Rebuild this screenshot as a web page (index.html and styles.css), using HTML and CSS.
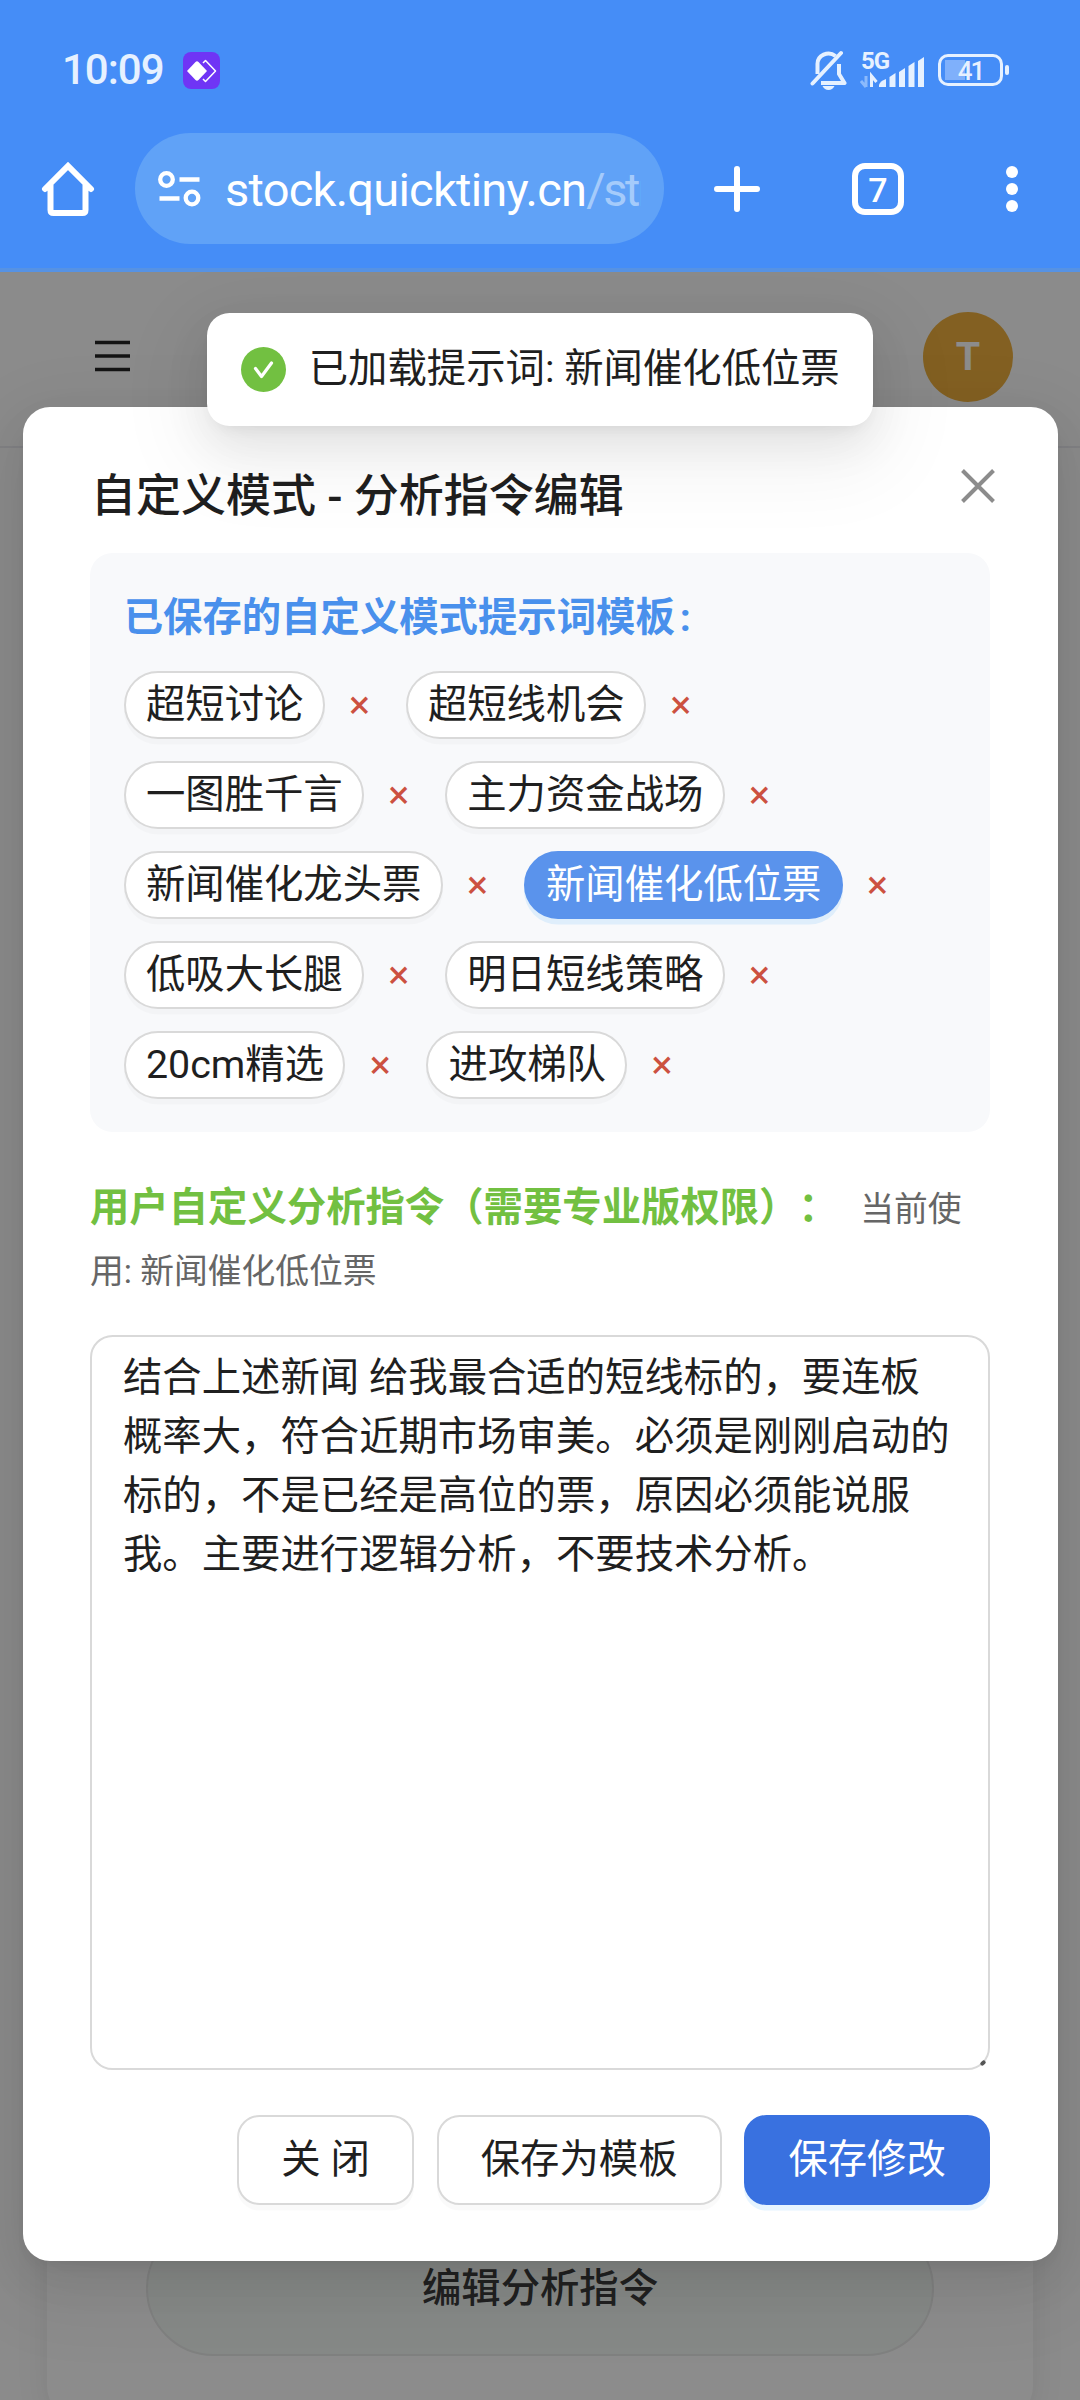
FILE: index.html
```html
<!DOCTYPE html>
<html lang="zh-CN">

<head>
    <meta charset="UTF-8">
    <meta name="viewport" content="width=device-width, initial-scale=1.0">
    <title>自定义模式 - 分析指令编辑</title>
    <link rel="stylesheet" href="styles.css">
</head>

<body>
    <div class="browser">
        <div class="status-bar">
            <span class="time">10:09</span>
            <svg class="app-icon" width="37" height="37" viewBox="0 0 37 37">
                <rect width="37" height="37" rx="8" fill="#6f35f5"/>
                <path d="M20 11l2.500-2.500L32.500 19 22.500 29.500 20 27" fill="none" stroke="#fff" stroke-width="1.500" stroke-linejoin="round"/>
                <path d="M4 19L12.500 10Q14 8.500 15.500 10L24 19 15.500 28Q14 29.500 12.500 28Z" fill="#fff"/>
            </svg>
            <div class="status-icons">
                <svg class="bell" width="37" height="41" viewBox="0 0 37 41">
                    <path d="M7.500 24V14.500a11 10.500 0 0 1 18-8.500M29 14v10l5.500 9H11" fill="none" stroke="#e6f1ff" stroke-width="4" stroke-linejoin="round"/>
                    <path d="M2.500 33.500L31 3" stroke="#e6f1ff" stroke-width="4" stroke-linecap="round"/>
                    <path d="M12.500 36h12q-2 4-6 4t-6-4z" fill="#e6f1ff"/>
                </svg>
                <div class="signal">
                    <span class="network">5G</span>
                    <svg width="66" height="36" viewBox="0 0 66 36">
                        <path d="M6 24v11M6 35l-5-6" stroke="#8bbafc" stroke-width="3" fill="none"/>
                        <path d="M11.500 35V24l5 6" stroke="#e6f1ff" stroke-width="3" fill="none"/>
                        <g fill="#e6f1ff">
                            <path d="M19 33q1-4 7-6v8h-7z"/>
                            <path d="M29.500 25l6-4v14h-6z"/>
                            <path d="M39 20l6-4v19h-6z"/>
                            <path d="M48.500 14l6-4v25h-6z"/>
                            <path d="M58 9l6-4v30h-6z"/>
                        </g>
                    </svg>
                </div>
                <div class="battery"><span class="battery-level">41</span></div>
            </div>
        </div>

        <div class="toolbar">
            <svg class="home" width="54" height="56" viewBox="0 0 54 56">
                <path d="M4 28L27 5l23 23M9.500 24v25q0 3 3 3h29q3 0 3-3V24" fill="none" stroke="#fff" stroke-width="6" stroke-linecap="round"/>
            </svg>
            <div class="url-bar">
                <svg width="44" height="38" viewBox="0 0 44 38">
                    <g fill="none" stroke="#fff" stroke-width="4.300">
                        <circle cx="8.500" cy="9.500" r="6.300"/>
                        <circle cx="34" cy="28" r="6.300"/>
                        <path d="M21.500 9.500h20M1.500 28.500h20"/>
                    </g>
                </svg>
                <div class="url">stock.quicktiny.cn<span class="url-path">/str</span></div>
            </div>
            <svg class="plus" width="46" height="46" viewBox="0 0 46 46">
                <path d="M23 3v40M3 23h40" stroke="#fff" stroke-width="6" stroke-linecap="round"/>
            </svg>
            <div class="tabs">7</div>
            <svg class="more" width="12" height="48" viewBox="0 0 12 48">
                <g fill="#fff">
                    <circle cx="6" cy="7" r="6"/>
                    <circle cx="6" cy="24" r="6"/>
                    <circle cx="6" cy="41" r="6"/>
                </g>
            </svg>
        </div>
    </div>

    <div class="page">
        <header class="page-header">
            <svg width="35" height="32" viewBox="0 0 35 32">
                <path d="M0 2.500h35M0 16h35M0 29.500h35" stroke="#262626" stroke-width="3.500"/>
            </svg>
            <div class="avatar">T</div>
        </header>
        <main class="page-card">
            <button class="edit-btn">编辑分析指令</button>
        </main>

        <div class="mask"></div>

        <div class="modal">
            <h1 class="modal-title">自定义模式 - 分析指令编辑</h1>
            <svg class="modal-close" width="36" height="36" viewBox="0 0 36 36">
                <path d="M2.500 2.500l31 31M33.500 2.500l-31 31" stroke="#8c8c8c" stroke-width="4"/>
            </svg>

            <section class="templates">
                <h2 class="templates-title">已保存的自定义模式提示词模板<span class="colon">:</span></h2>
                <div class="template-list">
                    <div class="template"><button class="chip">超短讨论</button><button class="delete">×</button></div>
                    <div class="template"><button class="chip">超短线机会</button><button class="delete">×</button></div>
                    <div class="template"><button class="chip">一图胜千言</button><button class="delete">×</button></div>
                    <div class="template"><button class="chip">主力资金战场</button><button class="delete">×</button></div>
                    <div class="template"><button class="chip">新闻催化龙头票</button><button class="delete">×</button></div>
                    <div class="template"><button class="chip active">新闻催化低位票</button><button class="delete">×</button></div>
                    <div class="template"><button class="chip">低吸大长腿</button><button class="delete">×</button></div>
                    <div class="template"><button class="chip">明日短线策略</button><button class="delete">×</button></div>
                    <div class="template"><button class="chip">20cm精选</button><button class="delete">×</button></div>
                    <div class="template"><button class="chip">进攻梯队</button><button class="delete">×</button></div>
                </div>
            </section>

            <div class="prompt-label"><strong>用户自定义分析指令（需要专业版权限）：</strong><span class="current">当前使用: 新闻催化低位票</span></div>

            <div class="prompt-box">
                <textarea class="prompt-input">结合上述新闻 给我最合适的短线标的，要连板概率大，符合近期市场审美。必须是刚刚启动的标的，不是已经是高位的票，原因必须能说服我。主要进行逻辑分析，不要技术分析。</textarea>
                <span class="resize-handle"></span>
            </div>

            <div class="modal-footer">
                <button class="btn">关 闭</button>
                <button class="btn">保存为模板</button>
                <button class="btn btn-primary">保存修改</button>
            </div>
        </div>

        <div class="message">
            <svg width="45" height="45" viewBox="0 0 45 45">
                <circle cx="22.500" cy="22.500" r="22.500" fill="#72c041"/>
                <path d="M14.500 21.500l6 8L30.500 16" fill="none" stroke="#fff" stroke-width="3.200" stroke-linecap="round" stroke-linejoin="round"/>
            </svg>
            <span>已加载提示词: 新闻催化低位票</span>
        </div>
    </div>
</body>

</html>
```
FILE: styles.css
```css
* {
    margin: 0;
    padding: 0;
    box-sizing: border-box;
}

body {
    width: 1080px;
    height: 2400px;
    overflow: hidden;
    display: flex;
    flex-direction: column;
    font-family: Roboto, 'Noto Sans CJK SC', sans-serif;
    font-size: 39.375px;
    line-height: 61.875px;
    color: #1f1f1f;
    text-spacing-trim: space-all;
}

svg {
    display: block;
    flex-shrink: 0;
}

button,
textarea {
    font: inherit;
    color: inherit;
}

/* Browser chrome */
.browser {
    height: 272px;
    flex-shrink: 0;
    background: #458df7;
    border-bottom: 4px solid #5692e3;
}

.status-bar {
    display: flex;
    align-items: center;
    height: 133px;
    padding: 7px 71px 0 62px;
    color: #e6f1ff;
}

.time {
    width: 121px;
    font-size: 42px;
    font-weight: 500;
    letter-spacing: -1px;
}

.status-icons {
    display: flex;
    align-items: center;
    margin-left: auto;
}

.signal {
    position: relative;
    margin: 0 12px 0 13px;
}

.network {
    position: absolute;
    left: 1px;
    top: -2px;
    font-size: 24px;
    font-weight: 700;
    line-height: 22px;
    letter-spacing: -1px;
}

.battery {
    position: relative;
    width: 65px;
    height: 32px;
    border: 3px solid #e6f1ff;
    border-radius: 10px;
    text-align: center;
    margin-right: 6px;
    background: linear-gradient(#7fb0fb, #7fb0fb) 4px 3px / 20px 20px no-repeat;
}

.battery::after {
    content: '';
    position: absolute;
    right: -9px;
    top: 8px;
    width: 4px;
    height: 10px;
    border-radius: 2px;
    background: #e6f1ff;
}

.battery-level {
    display: block;
    font-size: 26px;
    font-weight: 500;
    line-height: 28px;
    letter-spacing: -2px;
}

.toolbar {
    display: flex;
    align-items: center;
    height: 111px;
    padding: 0 62px 0 41px;
}

.url-bar {
    display: flex;
    align-items: center;
    width: 529px;
    height: 111px;
    margin: 0 50px 0 40px;
    padding: 0 23px;
    border-radius: 56px;
    background: #60a2f7;
}

.url {
    flex: 1;
    margin: 3px 0 0 23px;
    overflow: hidden;
    white-space: nowrap;
    font-size: 47px;
    letter-spacing: -0.75px;
    color: #fff;
}

.url-path {
    letter-spacing: -2.5px;
    color: #a5cbfb;
}

.tabs {
    width: 52px;
    height: 52px;
    margin: 0 102px 0 92px;
    border: 6px solid #fff;
    border-radius: 13px;
    color: #fff;
    font-size: 34px;
    font-weight: 500;
    line-height: 42px;
    text-align: center;
}

/* Page under the mask */
.page {
    position: relative;
    flex: 1;
    display: flex;
    flex-direction: column;
    overflow: hidden;
    background: #fdfdfd;
}

.page-header {
    display: flex;
    align-items: flex-start;
    justify-content: space-between;
    flex-shrink: 0;
    height: 176px;
    padding: 40px 67px 0 95px;
    border-bottom: 2px solid #ebecf0;
}

.page-header svg {
    margin-top: 28px;
}

.avatar {
    width: 90px;
    height: 90px;
    border-radius: 50%;
    background: #eeb03e;
    color: #fff;
    font-weight: 700;
    line-height: 90px;
    text-align: center;
}

.page-card {
    flex: 1;
    display: flex;
    align-items: flex-end;
    margin: 45px 47px -20px;
    padding: 0 99px 64px;
    border-radius: 34px;
    background: #fff;
    box-shadow: 0 6px 34px rgba(0, 0, 0, 0.08);
}

.edit-btn {
    width: 100%;
    height: 135px;
    border: 2px solid #e9ebea;
    border-radius: 68px;
    background: #f4f9f6;
    color: #3c3c3c;
    font-weight: 500;
}

.mask {
    position: absolute;
    inset: 0;
    background: rgba(0, 0, 0, 0.45);
}

/* Modal */
.modal {
    position: absolute;
    top: 135px;
    left: 23px;
    width: 1035px;
    padding: 56px 68px 56px 67px;
    border-radius: 27px;
    background: #fff;
    box-shadow: 0 17px 45px rgba(0, 0, 0, 0.08), 0 8px 17px -11px rgba(0, 0, 0, 0.12), 0 25px 79px 22px rgba(0, 0, 0, 0.05);
}

.modal-title {
    margin: 0 0 22.5px 1px;
    font-size: 45px;
    font-weight: 500;
    line-height: 67.5px;
    white-space: pre;
}

.modal-close {
    position: absolute;
    top: 61px;
    right: 62px;
}

.templates {
    padding: 33.75px;
    border-radius: 22.5px;
    background: #f8f9fb;
}

.templates-title {
    margin-bottom: 22.5px;
    color: #4990ec;
    font-size: 39.375px;
    font-weight: 700;
    line-height: 61.875px;
}

.colon {
    margin-left: 5px;
}

.template-list {
    display: flex;
    flex-wrap: wrap;
    gap: 22.5px;
}

.template {
    display: flex;
    align-items: center;
}

.chip {
    height: 67.5px;
    padding: 0 19.2px 0 20.2px;
    border: 2px solid #d9d9d9;
    border-radius: 34px;
    background: #fff;
    box-shadow: 0 5.6px 0 rgba(0, 0, 0, 0.02);
    line-height: 61px;
    white-space: nowrap;
}

.chip.active {
    border-color: #5a93ec;
    background: #5a93ec;
    color: #fff;
    box-shadow: 0 5.6px 0 rgba(5, 145, 255, 0.1);
}

.delete {
    width: 47.4px;
    height: 67.5px;
    margin-left: 11.25px;
    border: none;
    background: none;
    color: #cc5140;
}

.prompt-label {
    height: 123.75px;
    margin: 45px 0 33.75px;
}

.prompt-label strong {
    color: #72c041;
    font-weight: 700;
}

.current {
    margin-left: 22.5px;
    color: #666;
    font-size: 33.75px;
    line-height: 56px;
}

.prompt-box {
    position: relative;
    height: 735px;
    margin-bottom: 45px;
}

.prompt-input {
    display: block;
    width: 100%;
    height: 100%;
    padding: 11.25px 31px;
    border: 2px solid #d9d9d9;
    border-radius: 22.5px;
    outline: none;
    overflow: hidden;
    resize: none;
    line-height: 59.06px;
}

.resize-handle {
    position: absolute;
    right: 4px;
    bottom: 5px;
    width: 6px;
    height: 4px;
    border-radius: 2px;
    background: #555;
    transform: rotate(-45deg);
}

.modal-footer {
    display: flex;
    justify-content: flex-end;
    gap: 22.5px;
}

.btn {
    height: 90px;
    padding: 0 42.2px;
    border: 2px solid #d9d9d9;
    border-radius: 22.5px;
    background: #fff;
    box-shadow: 0 5.6px 0 rgba(0, 0, 0, 0.02);
}

.btn-primary {
    border-color: #3971e0;
    background: #3971e0;
    color: #fff;
    box-shadow: 0 5.6px 0 rgba(5, 145, 255, 0.1);
}

/* Toast */
.message {
    position: absolute;
    top: 41px;
    left: 207px;
    display: flex;
    align-items: center;
    gap: 23px;
    width: 666px;
    height: 112.5px;
    padding: 0 33.75px;
    border-radius: 22.5px;
    background: #fff;
    box-shadow: 0 17px 45px rgba(0, 0, 0, 0.08), 0 8px 17px -11px rgba(0, 0, 0, 0.12), 0 25px 79px 22px rgba(0, 0, 0, 0.05);
    white-space: nowrap;
}
```
